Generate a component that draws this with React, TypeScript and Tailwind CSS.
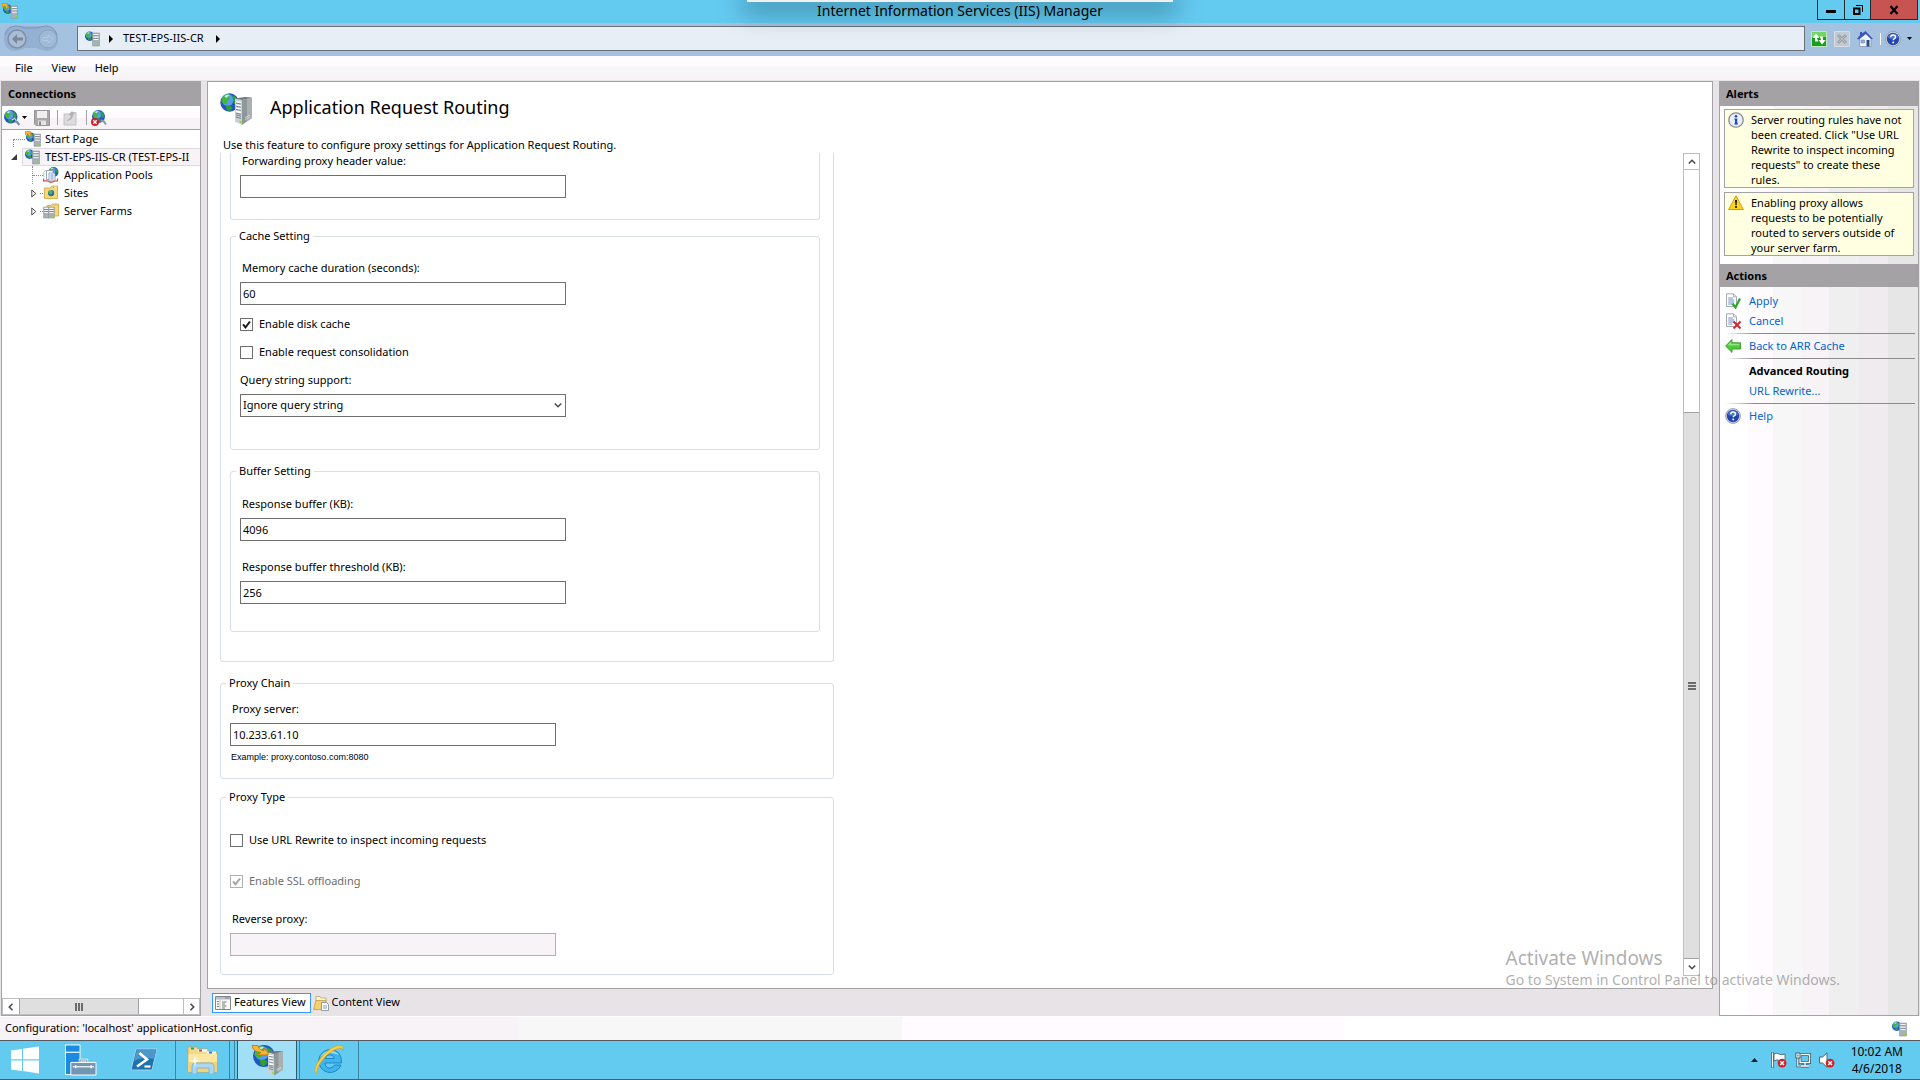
import React, { useState } from "react"

type IconProps = { className?: string }

/* ---------- ICONS ---------- */

function Globe({ x, y, s }: { x: number; y: number; s: number }) {
  return (
    <g transform={`translate(${x} ${y}) scale(${s})`}>
      <circle cx="5" cy="5" r="5" fill="#1f56c4" />
      <circle cx="4" cy="3.6" r="3.2" fill="#6db4f4" opacity="0.75" />
      <path d="M1.2 2.2C2.4.8 3.8.3 5 .6L4.3 2l.9.9-1.6 1.4.4 1.3-1.6.3L.6 4.6z" fill="#3fb83a" />
      <path d="M6.4 1l2 1 1 2-.5 2.3-1.4-.6-.5-2zM3 6.6l2.6.2 1 1.2-1.6 1.8-1.6-.9z" fill="#2f9e36" />
      <path d="M2.2 1.6q1.6-1.1 2.8-.6L3.2 2.6z" fill="#e9f8ff" opacity="0.8" />
    </g>
  )
}

function Server({ x, y, s }: { x: number; y: number; s: number }) {
  return (
    <g transform={`translate(${x} ${y}) scale(${s})`}>
      <path d="M0 0h7v13H0z" fill="#a9b1b8" />
      <path d="M0 0h7v13H0z" fill="none" stroke="#8d969d" strokeWidth="0.6" />
      <path d="M1 1h5v1.4H1zM1 3.4h5v1.4H1zM1 5.8h5v1.2H1z" fill="#f3f6f8" />
      <path d="M1 2.5h5v.6H1zM1 5h5v.6H1z" fill="#59636c" />
      <path d="M4.4 10.4h1.7v1.6H4.4z" fill="#7fe01c" />
    </g>
  )
}

function IisIcon({ className = "w-4 h-4" }: IconProps) {
  return (
    <svg viewBox="0 0 16 16" className={className} aria-hidden="true">
      <Globe x={0} y={0.5} s={0.95} />
      <Server x={7.5} y={2} s={1} />
    </svg>
  )
}

function IisHomeIcon({ className = "w-4 h-4" }: IconProps) {
  return (
    <svg viewBox="0 0 16 16" className={className} aria-hidden="true">
      <Globe x={1} y={1.5} s={0.95} />
      <Server x={9} y={3} s={0.95} />
      <path d="M0 .5h5.5v3L7 3.2 4.6 6 2.8 2.6 0 4z" fill="#f7b52a" stroke="#c27a08" strokeWidth="0.5" />
    </svg>
  )
}

function Tower({ x, y, s }: { x: number; y: number; s: number }) {
  return (
    <g transform={`translate(${x} ${y}) scale(${s})`}>
      <path d="M0 1.4L7 3v25L0 24.6z" fill="#c9d1d7" />
      <path d="M7 3l10-2.6V21L7 28z" fill="#8f9898" />
      <path d="M12 1.8L17 .4V21l-5 3.5z" fill="#b4bbbb" opacity="0.7" />
      <path d="M0 1.4L10 0l7 .4L7 3z" fill="#6e7880" />
      <path d="M1 4l5 1v1.6L1 5.6zM1 7.2l5 1v1.6l-5-1zM1 10.4l5 1V13l-5-1zM1 13.6l5 1v1.6l-5-1z" fill="#fff" />
      <path d="M1 6l5 1M1 9.2l5 1M1 12.4l5 1M1 16.2l5 1M1 18l5 1.2M1 20l5 1.4" stroke="#56616b" strokeWidth="0.7" />
      <path d="M4.6 23.5l2 .8v2l-2-.9z" fill="#84e01e" />
      <path d="M10 20.5l5-3v1l-5 3zM10 22.4l5-3v.8l-5 3z" fill="#d8dddd" />
    </g>
  )
}

function IisLargeIcon({ className = "w-8 h-8" }: IconProps) {
  return (
    <svg viewBox="0 0 32 32" className={className} aria-hidden="true">
      <Globe x={0.3} y={0.3} s={1.85} />
      <Tower x={15} y={4} s={1} />
    </svg>
  )
}

function IisTaskIcon({ className = "w-8 h-8" }: IconProps) {
  return (
    <svg viewBox="0 0 32 32" className={className} aria-hidden="true">
      <Globe x={2} y={1} s={2.2} />
      <Tower x={17} y={7} s={0.88} />
      <path d="M1 1.5h6q1 5 6 5V4l4 4.500v2.500H7l3-2.500Q2 8 1 1.500z" fill="#f8b62e" stroke="#b87409" strokeWidth="0.8" />
    </svg>
  )
}

function ConnectIcon({ className = "w-4 h-4" }: IconProps) {
  return (
    <svg viewBox="0 0 16 16" className={className} aria-hidden="true">
      <Globe x={0} y={0} s={1.35} />
      <path d="M7.500 10l3-2 2 2.500M11 11.500l2 .5 2.500 3" fill="none" stroke="#6f8fa5" strokeWidth="2" />
      <path d="M8 10l2.600-1.500L12 10.500" fill="none" stroke="#dbe9f1" strokeWidth="0.9" />
    </svg>
  )
}

function RedCross({ x, y }: { x: number; y: number }) {
  return (
    <g transform={`translate(${x} ${y})`}>
      <circle cx="4" cy="4" r="4" fill="#d61f26" />
      <path d="M2.300 2.300l3.400 3.400M5.700 2.300L2.300 5.700" stroke="#fff" strokeWidth="1.300" />
    </g>
  )
}

function DisconnectIcon({ className = "w-4 h-4" }: IconProps) {
  return (
    <svg viewBox="0 0 16 16" className={className} aria-hidden="true">
      <Globe x={1} y={0} s={1.3} />
      <path d="M9.500 10.500l3 .5 2.500 3.500" fill="none" stroke="#7f9bad" strokeWidth="2" />
      <RedCross x={0} y={8} />
    </svg>
  )
}

function SaveIcon({ className = "w-4 h-4" }: IconProps) {
  return (
    <svg viewBox="0 0 16 16" className={className} aria-hidden="true">
      <path d="M.5.5h15v15H2L.5 14z" fill="#a9a9a9" stroke="#979797" />
      <path d="M3 1h10v7H3z" fill="#f0f0f0" />
      <path d="M4 10.500h8V15H4z" fill="#e3e3e3" />
      <path d="M5 11.500h2V15H5z" fill="#8b8b8b" />
    </svg>
  )
}

function UpFolderIcon({ className = "w-4 h-4" }: IconProps) {
  return (
    <svg viewBox="0 0 16 16" className={className} aria-hidden="true">
      <path d="M2 4h6l1-1.500h5V15H2z" fill="#dcdcdc" stroke="#c2c2c2" />
      <path d="M5 10q4-1 3.500-5H6.500L10 1l3 3.500h-2Q11 10 5 11z" fill="#b1b1b1" />
    </svg>
  )
}

function AppPoolsIcon({ className = "w-4 h-4" }: IconProps) {
  return (
    <svg viewBox="0 0 16 16" className={className} aria-hidden="true">
      <Globe x={5.500} y={0} s={1} />
      <path d="M3.500 3.500h6.500v9H3.500z" fill="#fff" stroke="#8294a8" strokeWidth="0.8" />
      <path d="M6 6h6v8H6z" fill="#f5f9fd" stroke="#8294a8" strokeWidth="0.8" />
      <path d="M7.500 8h3M7.500 10h3M7.500 12h3" stroke="#4e8bd0" strokeWidth="0.9" />
      <path d="M.5 11.500v2.300h3.500L8 15.500l4-1.500h2.500v-2.500" fill="none" stroke="#d0483d" strokeWidth="1.200" />
      <path d="M.8 10V5.500L3 3" fill="none" stroke="#9fb0c0" strokeWidth="0.800" />
    </svg>
  )
}

function SitesIcon({ className = "w-4 h-4" }: IconProps) {
  return (
    <svg viewBox="0 0 16 16" className={className} aria-hidden="true">
      <path d="M1.500 3h6l1-2h6v12.500h-13z" fill="#f7d877" stroke="#d0a23c" strokeWidth="0.8" />
      <path d="M9.500 1.800h4v1.400h-4z" fill="#fff" />
      <path d="M9.800 2h1.500v1H9.800z" fill="#4ba3e3" />
      <Globe x={5} y={5} s={0.62} />
    </svg>
  )
}

function FarmsIcon({ className = "w-4 h-4" }: IconProps) {
  return (
    <svg viewBox="0 0 16 16" className={className} aria-hidden="true">
      <path d="M4 2.500h4l1-1.500h6.500v12H4z" fill="#f7d877" stroke="#d0a23c" strokeWidth="0.8" />
      <path d="M11 1.600h3.500V3H11z" fill="#a8cdea" />
      <Server x={0.400} y={4} s={0.85} />
      <Server x={5.500} y={4} s={0.85} />
    </svg>
  )
}

function RefreshIcon({ className = "w-4 h-4" }: IconProps) {
  return (
    <svg viewBox="0 0 16 16" className={className} aria-hidden="true">
      <path d="M.5.5h15v15H.5z" fill="#6fd862" stroke="#c3e6c0" />
      <path d="M1 6h14v9H1z" fill="#15a01b" />
      <path d="M5 2.500L1.200 7H4v3.500h3V8.500H6V7h2.500zM11 13.500l3.800-4.500H12V5.500H9v2h1V9H7.500z" fill="#fff" />
    </svg>
  )
}

function StopIcon({ className = "w-4 h-4" }: IconProps) {
  return (
    <svg viewBox="0 0 16 16" className={className} aria-hidden="true">
      <path d="M.5.5h15v15H.5z" fill="#c3cad4" stroke="#d8dde4" />
      <path d="M4 4l8 8M12 4l-8 8" stroke="#98a2ad" strokeWidth="3" />
      <path d="M4.500 4.500l7 7M11.500 4.500l-7 7" stroke="#b9c0ca" strokeWidth="1" />
    </svg>
  )
}

function HouseIcon({ className = "w-4 h-4" }: IconProps) {
  return (
    <svg viewBox="0 0 16 16" className={className} aria-hidden="true">
      <path d="M2.500 7L9 2l5 5.500v8h-11.500z" fill="#f1f5fa" stroke="#8797ab" strokeWidth="0.8" />
      <path d="M0 8L3 4V1h2v1.500L8.500 0 16 8h-2L8.800 3 2 8.500z" fill="#3b55c0" />
      <path d="M9.500 9h3v6.500h-3z" fill="#274e86" />
      <path d="M4 9h3.500v3H4z" fill="#8db2dd" stroke="#6d87a6" strokeWidth="0.6" />
    </svg>
  )
}

function HelpIcon({ className = "w-4 h-4" }: IconProps) {
  return (
    <svg viewBox="0 0 16 16" className={className} aria-hidden="true">
      <circle cx="8" cy="8" r="7.500" fill="#d4d8e2" stroke="#8e97a8" strokeWidth="0.8" />
      <circle cx="8" cy="8" r="6.200" fill="#2047b0" />
      <path d="M2.500 6.500a5.800 5.800 0 0 1 11 0q-5.500 3-11 0z" fill="#5a82da" opacity="0.7" />
      <path d="M5.800 6.200q0-2.200 2.300-2.200t2.300 1.900q0 1.300-1.300 1.900-.9.500-.9 1.500" fill="none" stroke="#fff" strokeWidth="1.500" />
      <circle cx="8.200" cy="11.600" r="1" fill="#fff" />
    </svg>
  )
}

function InfoIcon({ className = "w-4 h-4" }: IconProps) {
  return (
    <svg viewBox="0 0 16 16" className={className} aria-hidden="true">
      <circle cx="8" cy="8" r="7.200" fill="#eceef5" stroke="#848a96" strokeWidth="1.300" />
      <circle cx="8" cy="4.200" r="1.300" fill="#1d49c0" />
      <path d="M6.300 6.500h2.900v5h.8v1H6.300v-1H7v-4h-.7z" fill="#1d49c0" />
    </svg>
  )
}

function WarningIcon({ className = "w-4 h-4" }: IconProps) {
  return (
    <svg viewBox="0 0 16 16" className={className} aria-hidden="true">
      <path d="M8 .8l7.400 13.700H.6z" fill="#fcd51c" stroke="#cf9d12" strokeLinejoin="round" />
      <path d="M7 5h2l-.4 5.200H7.400z" fill="#141414" />
      <circle cx="8" cy="12" r="1.100" fill="#141414" />
    </svg>
  )
}

function PageLines() {
  return (
    <>
      <path d="M1.500.8h7l3 3v9.700h-10z" fill="#fdfdfe" stroke="#98a0a8" strokeWidth="0.9" />
      <path d="M8.500.8v3h3" fill="none" stroke="#98a0a8" strokeWidth="0.8" />
      <path d="M3.300 5h4.500M3.300 7h6M3.300 9h6M3.300 11h4" stroke="#5e83b9" strokeWidth="0.9" />
    </>
  )
}

function ApplyIcon({ className = "w-4 h-4" }: IconProps) {
  return (
    <svg viewBox="0 0 16 16" className={className} aria-hidden="true">
      <PageLines />
      <path d="M7.500 10.500l3 4 4.500-9" fill="none" stroke="#2fa82a" strokeWidth="2.200" />
    </svg>
  )
}

function CancelIcon({ className = "w-4 h-4" }: IconProps) {
  return (
    <svg viewBox="0 0 16 16" className={className} aria-hidden="true">
      <PageLines />
      <path d="M8.500 8.500l7 7M15.500 8.500l-7 7" stroke="#d8262c" strokeWidth="2" />
    </svg>
  )
}

function BackIcon({ className = "w-4 h-4" }: IconProps) {
  return (
    <svg viewBox="0 0 16 16" className={className} aria-hidden="true">
      <path d="M.6 8L7 1.500v3.300h8.500v6.200H7v3.400z" fill="#4fc83b" stroke="#319a28" strokeWidth="0.9" strokeLinejoin="round" />
      <path d="M2.500 7.500L6.200 3.700v2h8.300v1.500z" fill="#a6ec93" opacity="0.8" />
    </svg>
  )
}

function FeaturesIcon({ className = "w-4 h-4" }: IconProps) {
  return (
    <svg viewBox="0 0 16 16" className={className} aria-hidden="true">
      <path d="M.5 1.500h15v13H.5z" fill="#fbfbf8" stroke="#82878f" />
      <path d="M1 2h14v2.500H1z" fill="#b6bfca" />
      <path d="M10.500 2.500h1v1h-1zM12.500 2.500h1v1h-1z" fill="#4b5c79" />
      <path d="M5 4.500v10" stroke="#a9aeb5" strokeWidth="0.7" />
      <path d="M2 6.500h2M2 9h2M2 11.500h2M7 7h4.500M7 9h3M7 11h4.500M7 13h3" stroke="#6b7a70" />
    </svg>
  )
}

function ContentIcon({ className = "w-4 h-4" }: IconProps) {
  return (
    <svg viewBox="0 0 16 16" className={className} aria-hidden="true">
      <path d="M3 1.500h4l1 1.500h5v7H3z" fill="#fdf6dc" stroke="#b9a468" strokeWidth="0.8" />
      <path d="M.5 14.500L3 5.500h10l-2 9z" fill="#f3cf70" stroke="#c79c40" strokeWidth="0.8" />
      <path d="M8.500 7.500h5l2 2v6h-7z" fill="#fff" stroke="#7d8894" strokeWidth="0.8" />
      <path d="M10 11h4M10 13h4" stroke="#5c83b5" strokeWidth="0.8" />
    </svg>
  )
}

function WindowsLogo() {
  return (
    <svg viewBox="0 0 28 27" className="w-7 h-7" aria-hidden="true">
      <path d="M0 4l11-1.600v10.400H0zM12 2.200L28 0v12.800H12zM0 13.900h11v10.500L0 22.900zM12 13.900h16V27l-16-2.400z" fill="#fff" />
    </svg>
  )
}

function ServerManagerIcon() {
  return (
    <svg viewBox="0 0 33 32" className="w-8 h-8" aria-hidden="true">
      <path d="M.5.500h15V31H.5z" fill="#1b8be0" stroke="#fff" />
      <path d="M1 8h14" stroke="#fff" strokeWidth="1.200" />
      <path d="M15.500 19v-3h7v3" fill="none" stroke="#fff" strokeWidth="2.600" />
      <path d="M15.500 19v-3h7v3" fill="none" stroke="#6f92b0" strokeWidth="1.200" />
      <path d="M6 18.500h26V31.500H6z" fill="#7296b2" stroke="#fff" />
      <path d="M8 23h22" stroke="#fff" strokeWidth="1.200" />
      <path d="M11 21.500v3M27 21.500v3" stroke="#fff" strokeWidth="1.500" />
    </svg>
  )
}

function PowerShellIcon() {
  return (
    <svg viewBox="0 0 28 24" className="w-7 h-6" aria-hidden="true">
      <path d="M6 1h21l-5 21H1z" fill="#1f72ae" stroke="#9fd1ee" strokeLinejoin="round" />
      <path d="M6.600 2H26l-2.500 9Q12 8 4 13z" fill="#5fa7d6" opacity="0.7" />
      <path d="M9.500 5l7.500 6.500L7 18.500" fill="none" stroke="#fff" strokeWidth="2.500" />
      <path d="M14.500 18.500h6" stroke="#fff" strokeWidth="2.200" />
    </svg>
  )
}

function ExplorerIcon() {
  return (
    <svg viewBox="0 0 32 28" className="w-8 h-7" aria-hidden="true">
      <path d="M1 1h9l1 2h10v3h9v20H1z" fill="#f3d98c" stroke="#caa24a" strokeWidth="0.8" />
      <path d="M4 1.500h3v2H4z" fill="#28a745" />
      <path d="M11 3.500h9v2h-9z" fill="#fff" />
      <path d="M12 3.500h3v2h-3z" fill="#d8413a" />
      <path d="M20 5.500h9v2h-9z" fill="#fff" />
      <path d="M22 5.500h3v2h-3z" fill="#2f7fd8" />
      <path d="M1.500 8h28.500v18H1.500z" fill="#fbe7a4" />
      <path d="M1.500 16h28.500v10H1.500z" fill="#f3d27a" />
      <path d="M5 28v-8q0-3 4-3h14q4 0 4 3v8h-5v-6H10v6z" fill="#a9d8f2" stroke="#6fb0d8" strokeWidth="0.8" />
      <path d="M8 9l1 5 5 1-5 1-1 5-1-5-5-1 5-1z" fill="#fff" opacity="0.9" />
    </svg>
  )
}

function IeIcon() {
  return (
    <svg viewBox="0 0 32 32" className="w-8 h-8" aria-hidden="true">
      <path d="M17 5.500A11.500 11.500 0 1 0 28 21h-6.500q-1.500 3-4.800 3-4.400 0-4.700-5H28.500Q29 6 17 5.500zM12.200 14.500q.8-3.700 4.600-3.700 3.900 0 4.600 3.700z" fill="#3fb4ee" stroke="#1579bd" strokeWidth="0.8" />
      <path d="M7 14q3-7 10-7 6 0 9 4-4-2-9-2-6 0-10 5z" fill="#bfe9fc" opacity="0.8" />
      <path d="M4.500 30.500Q-1 28 5 18 12 7 22 2.500 31-1 30.500 7 30 3 25 4.500 15 8 8 18 2 27 4.500 30.500z" fill="#fbd23c" stroke="#d79e13" strokeWidth="0.6" />
    </svg>
  )
}

function FlagIcon() {
  return (
    <svg viewBox="0 0 16 16" className="w-4 h-4" aria-hidden="true">
      <path d="M1.500 0v16" stroke="#3f5560" strokeWidth="2.600" />
      <path d="M1.500.500v15" stroke="#fff" strokeWidth="1.200" />
      <path d="M3 2q3-1.500 5 0t6 0v7q-3 1-5.500-.5T3 9z" fill="#fff" stroke="#3f5560" strokeWidth="0.8" />
      <g transform="translate(-1 -1) scale(1.1)"><RedCross x={7} y={7} /></g>
    </svg>
  )
}

function NetworkIcon() {
  return (
    <svg viewBox="0 0 16 16" className="w-4 h-4" aria-hidden="true">
      <path d="M5 2.500h9.500v8H5zM10 10.500V14M6 14h8" fill="none" stroke="#2f5060" strokeWidth="2.800" />
      <path d="M5 2.500h9.500v8H5zM10 10.500V14M6 14h8" fill="none" stroke="#fff" strokeWidth="1.300" />
      <path d="M2.800 5.500V14h3" fill="none" stroke="#2f5060" strokeWidth="2.600" />
      <path d="M2.800 5.500V14h3" fill="none" stroke="#fff" strokeWidth="1.200" />
      <path d="M.8 1h4.200v5H.8z" fill="#fff" stroke="#2f5060" strokeWidth="0.9" />
      <path d="M2.400 2.500h1v2h-1z" fill="#2f5060" />
    </svg>
  )
}

function SpeakerIcon() {
  return (
    <svg viewBox="0 0 16 16" className="w-4 h-4" aria-hidden="true">
      <path d="M.6 5h3L8 .8v14.500L3.600 11h-3z" fill="#fff" stroke="#3f5560" strokeWidth="0.900" />
      <g transform="translate(-1 -1) scale(1.1)"><RedCross x={7} y={7} /></g>
    </svg>
  )
}

function Arrow({ className }: IconProps) {
  return (
    <svg viewBox="0 0 4 8" className={className} aria-hidden="true">
      <path d="M0 0l4 4-4 4z" fill="#000" />
    </svg>
  )
}

function Chevron({ className }: IconProps) {
  return (
    <svg viewBox="0 0 8 8" className={className} aria-hidden="true">
      <path d="M.8 5.500L4 2.300l3.200 3.200" fill="none" stroke="#4d4d4d" strokeWidth="1.600" />
    </svg>
  )
}

/* ---------- FORM PARTS ---------- */

function Group({ title, className = "", children }: { title: string; className?: string; children: React.ReactNode }) {
  return (
    <fieldset className={`border border-[#d6dfea] rounded-[3px] pl-[9px] min-w-0 ${className}`}>
      <legend className="-ml-1 px-[3px] leading-4">{title}</legend>
      {children}
    </fieldset>
  )
}

function TextField({ id, label, value = "", disabled = false, className = "" }: {
  id: string
  label: string
  value?: string
  disabled?: boolean
  className?: string
}) {

  const [text, setText] = useState(value)

  return (
    <div className={className}>
      <label htmlFor={id} className="block pl-0.5 mb-1.5 leading-4">{label}</label>
      <input
        id={id}
        type="text"
        value={text}
        disabled={disabled}
        onChange={(e) => setText(e.target.value)}
        className="block w-[326px] h-[23px] px-0.5 border border-[#6f6f6f] bg-white outline-none disabled:bg-[#f7f3f7] disabled:border-[#adb2b5]"
      />
    </div>
  )
}

function CheckField({ label, checked = false, disabled = false, className = "" }: {
  label: string
  checked?: boolean
  disabled?: boolean
  className?: string
}) {

  const [on, setOn] = useState(checked)

  return (
    <label className={`flex items-center gap-[6px] h-4 w-fit ${disabled ? "text-[#6d6d6d]" : ""} ${className}`}>
      <span className="relative w-[13px] h-[13px]">
        <input
          type="checkbox"
          checked={on}
          disabled={disabled}
          onChange={(e) => setOn(e.target.checked)}
          className="block appearance-none w-full h-full border border-[#6f6f6f] bg-white disabled:border-[#adb2b5]"
        />
        {on && (
          <svg viewBox="0 0 13 13" className="absolute inset-0 pointer-events-none" aria-hidden="true">
            <path d="M3 6.300l2.500 3L10 3.500" fill="none" stroke={disabled ? "#a5a5a5" : "#1c1c1c"} strokeWidth="2" />
          </svg>
        )}
      </span>
      {label}
    </label>
  )
}

/* ---------- TITLE, ADDRESS AND MENU BARS ---------- */

function TitleBar() {
  return (
    <header className="relative h-[23px] shrink-0 bg-[#64cbf0] flex justify-between">
      <div className="flex-1 pl-0.5 pt-[3px]"><IisHomeIcon /></div>

      {/* SESSION BAR */}
      <div className="absolute left-1/2 -translate-x-1/2 top-0 w-[426px] h-0.5 bg-[#f0f0f0] shadow-[0_4px_24px_5px_rgba(0,40,60,0.55)]"></div>

      <h1 className="relative text-[14px] leading-[22px]">Internet Information Services (IIS) Manager</h1>

      <div className="flex-1 flex justify-end pr-0.5">
        <div className="flex h-5 border border-t-0 border-[#26292b] divide-x divide-[#26292b]">
          <button aria-label="Minimize" className="w-[27px] flex justify-center pt-2.5">
            <span className="block w-2.5 h-[3px] bg-black"></span>
          </button>
          <button aria-label="Restore" className="w-[26px] flex items-center justify-center">
            <svg viewBox="0 0 10 10" className="w-2.5 h-2.5" aria-hidden="true">
              <path d="M1 3.500h5.500V9H1z" fill="none" stroke="#000" strokeWidth="2" />
              <path d="M3 .5h6.500V7" fill="none" stroke="#000" />
            </svg>
          </button>
          <button aria-label="Close" className="w-[46px] bg-[#c75450] flex items-center justify-center">
            <svg viewBox="0 0 10 10" className="w-2.5 h-2.5" aria-hidden="true">
              <path d="M1.500 1l7 8M8.500 1l-7 8" stroke="#000" strokeWidth="2.200" />
            </svg>
          </button>
        </div>
      </div>
    </header>
  )
}

function AddressBar() {
  return (
    <div className="h-[33px] shrink-0 bg-[#a4c1df] flex items-center pl-1 pr-2 pb-0.5">
      <svg viewBox="0 0 55 27" className="w-[55px] h-[27px]" aria-hidden="true">
        <path d="M12 1h30q12 1 12 13T42 26q-5 0-9-3H21q-4 3-9 3Q0 26 0 13T12 1z" fill="#94b1d3" />
        <path d="M1 10Q4 1 12 1q4 0 8 2h14q4-2 8-2 8 0 11 9" fill="none" stroke="#7796bb" />
        <circle cx="13" cy="14" r="9" fill="#a7bdd8" stroke="#7f8fa5" strokeWidth="1.500" />
        <path d="M8 14l5-5v3.500h6v3h-6V19z" fill="#7b8798" />
        <circle cx="44" cy="14" r="9" fill="#9fb9d9" stroke="#8ba1bd" />
        <path d="M49 14l-5-4v2.500h-5v3h5V18z" fill="none" stroke="#b5c9e1" />
      </svg>

      <nav className="ml-[18px] flex-1 h-[25px] border border-[#6b7076] bg-[#e7eef6] flex items-center pl-[7px]">
        <IisIcon />
        <Arrow className="ml-2 w-1 h-2" />
        <a href="#server" className="ml-2.5">TEST-EPS-IIS-CR</a>
        <Arrow className="ml-3 w-1 h-2" />
      </nav>

      <div className="ml-1.5 flex items-center gap-[7px]">
        <button aria-label="Refresh"><RefreshIcon /></button>
        <button aria-label="Stop"><StopIcon /></button>
        <button aria-label="Home"><HouseIcon /></button>
        <span className="w-px h-3 bg-white"></span>
      </div>
      <button aria-label="Help" className="ml-1 flex items-center gap-1.5">
        <HelpIcon />
        <svg viewBox="0 0 5 3" className="w-[5px] h-[3px]" aria-hidden="true"><path d="M0 0h5L2.500 3z" /></svg>
      </button>
    </div>
  )
}

function MenuBar() {
  return (
    <div className="h-[25px] shrink-0 flex items-center gap-[19px] pl-[15px] bg-[linear-gradient(#fffbff_0_10px,#f6f7f6_10px_18px,#f7f3f7_18px_24px,#e7e3e7_24px)]">
      <button>File</button>
      <button>View</button>
      <button>Help</button>
    </div>
  )
}

/* ---------- CONNECTIONS ---------- */

function Connections() {
  return (
    <aside className="w-[200px] ml-px shrink-0 border border-[#a5a2a5] bg-white flex flex-col min-h-0">

      <h2 className="h-6 shrink-0 bg-[#a5a2a5] font-bold leading-6 pl-1.5">Connections</h2>

      <div className="h-6 shrink-0 border-b border-[#a5a2a5] flex items-center pl-0.5 bg-[linear-gradient(#ffffff_0_6px,#fffbff_6px_12px,#f7f3f7_12px)]">
        <button aria-label="Connect" className="flex items-center gap-0.5">
          <ConnectIcon />
          <svg viewBox="0 0 5 3" className="w-[5px] h-[3px]" aria-hidden="true"><path d="M0 0h5L2.500 3z" /></svg>
        </button>
        <button aria-label="Save" disabled className="ml-[7px]"><SaveIcon /></button>
        <span className="ml-[7px] w-px h-[15px] bg-[#a5a2a5]"></span>
        <button aria-label="Up" disabled className="ml-1"><UpFolderIcon /></button>
        <span className="ml-2 w-px h-[15px] bg-[#a5a2a5]"></span>
        <button aria-label="Delete connection" className="ml-1"><DisconnectIcon /></button>
      </div>

      {/* TREE */}
      <ul className="flex-1 min-h-0 overflow-hidden whitespace-nowrap">
        <li className="h-[18px] flex items-center">
          <span className="ml-[11px] w-3 h-2 mt-2 border-l border-t border-dotted border-[#8c8c8c]"></span>
          <IisHomeIcon className="w-4 h-4 shrink-0" />
          <span className="ml-1">Start Page</span>
        </li>
        <li className="h-[18px] flex items-center">
          <svg viewBox="0 0 6 6" className="ml-[9px] w-1.5 h-1.5 shrink-0" aria-hidden="true"><path d="M6 0v6H0z" fill="#3c3c3c" /></svg>
          <span className="ml-[5px] h-[18px] flex-1 min-w-0 flex items-center pl-0.5 bg-[#f7f3f7] border-y border-l border-[#dedbde]">
            <IisIcon className="w-4 h-4 shrink-0" />
            <span className="ml-1">TEST-EPS-IIS-CR (TEST-EPS-II</span>
          </span>
        </li>
        <li className="h-[18px] flex items-center">
          <span className="ml-[30px] w-[11px] h-[18px] border-l border-dotted border-[#8c8c8c] flex items-center">
            <span className="w-full border-t border-dotted border-[#8c8c8c]"></span>
          </span>
          <AppPoolsIcon className="w-4 h-4 shrink-0" />
          <span className="ml-[5px]">Application Pools</span>
        </li>
        <li className="h-[18px] flex items-center">
          <svg viewBox="0 0 6 9" className="ml-[29px] w-1.5 h-[9px] shrink-0" aria-hidden="true"><path d="M.8 1v7l4-3.500z" fill="#fff" stroke="#4c4c4c" /></svg>
          <span className="ml-[3px] w-[3px] border-t border-dotted border-[#8c8c8c]"></span>
          <SitesIcon className="w-4 h-4 shrink-0" />
          <span className="ml-[5px]">Sites</span>
        </li>
        <li className="h-[18px] flex items-center">
          <svg viewBox="0 0 6 9" className="ml-[29px] w-1.5 h-[9px] shrink-0" aria-hidden="true"><path d="M.8 1v7l4-3.500z" fill="#fff" stroke="#4c4c4c" /></svg>
          <span className="ml-[3px] w-[3px] border-t border-dotted border-[#8c8c8c]"></span>
          <FarmsIcon className="w-4 h-4 shrink-0" />
          <span className="ml-[5px]">Server Farms</span>
        </li>
      </ul>

      {/* HORIZONTAL SCROLLBAR */}
      <div className="h-[17px] shrink-0 flex border border-[#bdbebd]">
        <button aria-label="Scroll left" className="w-4 flex items-center justify-center"><Chevron className="w-2 h-2 -rotate-90" /></button>
        <div className="w-[120px] bg-[#dedfde] border-x border-[#a5a2a5] flex items-center justify-center gap-px">
          <span className="w-0.5 h-2 bg-[#6b6b6b]"></span>
          <span className="w-0.5 h-2 bg-[#6b6b6b]"></span>
          <span className="w-0.5 h-2 bg-[#6b6b6b]"></span>
        </div>
        <div className="flex-1"></div>
        <button aria-label="Scroll right" className="w-4 border-l border-[#bdbebd] flex items-center justify-center"><Chevron className="w-2 h-2 rotate-90" /></button>
      </div>

    </aside>
  )
}

/* ---------- FEATURE PAGE ---------- */

function ProxySettings() {

  const [query, setQuery] = useState("ignore")

  return (
    <form className="w-[614px]" onSubmit={(e) => e.preventDefault()}>

      {/* SERVER PROXY SETTINGS */}
      <div className="border border-t-0 border-[#d6dfea] rounded-b-[3px] pl-[9px] pr-[13px] pb-[29px]">

        <div className="border border-t-0 border-[#d6dfea] rounded-b-[3px] pl-[9px] pb-[21px]">
          <TextField id="header" label="Forwarding proxy header value:" />
        </div>

        <Group title="Cache Setting" className="mt-2 pb-8">
          <TextField id="duration" label="Memory cache duration (seconds):" value="60" className="pt-4" />
          <CheckField label="Enable disk cache" checked className="mt-[11px]" />
          <CheckField label="Enable request consolidation" className="mt-3" />
          <label htmlFor="query" className="block mt-3 mb-1.5 leading-4">Query string support:</label>
          <div className="relative w-[326px]">
            <select
              id="query"
              value={query}
              onChange={(e) => setQuery(e.target.value)}
              className="block appearance-none w-full h-[23px] px-0.5 border border-[#6f6f6f] bg-white outline-none"
            >
              <option value="ignore">Ignore query string</option>
              <option value="include">Include query string</option>
              <option value="none">Do not cache</option>
            </select>
            <Chevron className="absolute right-1 top-[7px] w-2 h-2 rotate-180 pointer-events-none" />
          </div>
        </Group>

        <Group title="Buffer Setting" className="mt-[13px] pb-[27px]">
          <TextField id="buffer" label="Response buffer (KB):" value="4096" className="pt-[17px]" />
          <TextField id="threshold" label="Response buffer threshold (KB):" value="256" className="pt-[18px]" />
        </Group>

      </div>

      {/* PROXY CHAIN */}
      <Group title="Proxy Chain" className="mt-[13px] pb-[13px]">
        <TextField id="proxy" label="Proxy server:" value="10.233.61.10" className="pt-2.5" />
        <p className="mt-[3px] pl-px font-['Liberation_Sans',sans-serif] text-[9px] leading-4">Example: proxy.contoso.com:8080</p>
      </Group>

      {/* PROXY TYPE */}
      <Group title="Proxy Type" className="mt-2.5 pb-[18px]">
        <CheckField label="Use URL Rewrite to inspect incoming requests" className="mt-[27px]" />
        <CheckField label="Enable SSL offloading" checked disabled className="mt-[25px]" />
        <TextField id="reverse" label="Reverse proxy:" disabled className="pt-[22px]" />
      </Group>

    </form>
  )
}

function FeaturePage() {
  return (
    <main className="flex-1 min-w-0 mx-1.5 flex flex-col">

      <div className="flex-1 min-h-0 border border-[#a5a2a5] bg-white px-3 pb-3 flex flex-col">

        <div className="flex items-center pt-2.5 h-10 shrink-0">
          <IisLargeIcon className="w-8 h-8 mt-1" />
          <h2 className="ml-[18px] text-[18px] leading-6">Application Request Routing</h2>
        </div>

        <p className="pl-[3px] pt-[15px] h-[31px] leading-4 shrink-0">Use this feature to configure proxy settings for Application Request Routing.</p>

        <div className="flex-1 min-h-0 flex justify-between">

          <div className="overflow-hidden"><ProxySettings /></div>

          {/* VERTICAL SCROLLBAR */}
          <div className="w-[17px] border border-[#bdbebd] flex flex-col">
            <button aria-label="Scroll up" className="h-4 border-b border-[#bdbebd] flex items-center justify-center"><Chevron className="w-2 h-2" /></button>
            <div className="flex-[243]"></div>
            <div className="flex-[546] bg-[#dedfde] border-y border-[#a5a2a5] flex flex-col items-center justify-center gap-px">
              <span className="w-2 h-0.5 bg-[#6b6b6b]"></span>
              <span className="w-2 h-0.5 bg-[#6b6b6b]"></span>
              <span className="w-2 h-0.5 bg-[#6b6b6b]"></span>
            </div>
            <button aria-label="Scroll down" className="h-4 flex items-center justify-center"><Chevron className="w-2 h-2 rotate-180" /></button>
          </div>

        </div>

      </div>

      {/* VIEW TABS */}
      <div className="h-[27px] shrink-0 pl-[5px] flex items-center">
        <button className="h-5 pl-0.5 pr-1 flex items-center gap-[3px] border border-[#3399ff] bg-white"><FeaturesIcon />Features View</button>
        <button className="h-5 px-0.5 flex items-center gap-[3px]"><ContentIcon />Content View</button>
      </div>

    </main>
  )
}

/* ---------- ALERTS AND ACTIONS ---------- */

function PanelAction({ icon, label }: { icon?: React.ReactNode; label: string }) {
  return (
    <a href="#action" className="h-5 flex items-center gap-2 text-[#0066cc]">
      <span className="w-4 h-4">{icon}</span>
      {label}
    </a>
  )
}

function Divider() {
  return <div className="h-px my-0.5 bg-[linear-gradient(90deg,transparent,#8c8a8c_16%)]"></div>
}

function ActionsPane() {
  return (
    <aside className="w-[200px] shrink-0 border border-[#a5a2a5] bg-[linear-gradient(90deg,#fff_0_14%,#fffbff_14%_27%,#f6f7f6_27%_42%,#f7f3f7_42%_55%,#efefef_55%_70%,#efebef_70%_85%,#e6e6e6_85%)]">

      <h2 className="h-6 bg-[#a5a2a5] font-bold leading-6 pl-1.5">Alerts</h2>

      <div className="px-1 pt-[3px] pb-1 flex flex-col gap-1 leading-[15px]">
        <div className="h-[79px] border border-[#a5a2a5] bg-[#ffffe1] flex gap-[7px] pl-[3px] pt-0.5">
          <InfoIcon className="w-4 h-4 shrink-0" />
          <p className="whitespace-nowrap">
            Server routing rules have not<br />
            been created. Click "Use URL<br />
            Rewrite to inspect incoming<br />
            requests" to create these<br />
            rules.
          </p>
        </div>
        <div className="h-16 border border-[#a5a2a5] bg-[#ffffe1] flex gap-[7px] pl-[3px] pt-0.5">
          <WarningIcon className="w-4 h-4 shrink-0" />
          <p className="whitespace-nowrap">
            Enabling proxy allows<br />
            requests to be potentially<br />
            routed to servers outside of<br />
            your server farm.
          </p>
        </div>
      </div>

      <h2 className="mt-1 h-[23px] bg-[#a5a2a5] font-bold leading-[23px] pl-1.5">Actions</h2>

      <div className="pl-[5px] pr-[3px] pt-1">
        <PanelAction icon={<ApplyIcon />} label="Apply" />
        <PanelAction icon={<CancelIcon />} label="Cancel" />
        <Divider />
        <PanelAction icon={<BackIcon />} label="Back to ARR Cache" />
        <Divider />
        <h3 className="h-5 pl-6 leading-5 font-bold">Advanced Routing</h3>
        <PanelAction label="URL Rewrite..." />
        <Divider />
        <PanelAction icon={<HelpIcon />} label="Help" />
      </div>

    </aside>
  )
}

/* ---------- TASKBAR ---------- */

function Taskbar() {
  return (
    <footer className="h-10 shrink-0 bg-[#64cbf0] border-y border-[#555a5e] flex items-stretch">
      <button aria-label="Start" className="w-[50px] flex items-center justify-center"><WindowsLogo /></button>
      <button aria-label="Server Manager" className="w-[62px] flex items-center justify-center"><ServerManagerIcon /></button>
      <button aria-label="PowerShell" className="w-[63px] flex items-center justify-center"><PowerShellIcon /></button>
      <button aria-label="File Explorer" className="w-[55px] border-x border-[#3d87a3] flex items-center justify-center"><ExplorerIcon /></button>
      <span className="w-[5px] border-r border-[#3d87a3]"></span>
      <button aria-label="IIS Manager" className="ml-0.5 w-[60px] border-x border-[#2d5a6d] bg-[#a1dff7] flex items-center justify-center"><IisTaskIcon /></button>
      <button aria-label="Internet Explorer" className="ml-0.5 w-[60px] border-x border-[#3d87a3] flex items-center justify-center"><IeIcon /></button>

      <div className="ml-auto pr-[17px] flex items-center">
        <svg viewBox="0 0 7 4" className="w-[7px] h-1" aria-hidden="true"><path d="M0 4l3.500-4L7 4z" fill="#10222b" /></svg>
        <div className="ml-[13px] flex gap-2">
          <FlagIcon />
          <NetworkIcon />
          <SpeakerIcon />
        </div>
        <div className="ml-4 text-center text-[12px] leading-[17px]">
          10:02 AM<br />4/6/2018
        </div>
      </div>
    </footer>
  )
}

export default function App() {
  return (
    <div className="relative h-screen flex flex-col overflow-hidden bg-[#e7e3e7] text-black text-[11px] font-['Noto_Sans',sans-serif]">

      <TitleBar />
      <AddressBar />
      <MenuBar />

      <div className="flex-1 min-h-0 flex pr-px">
        <Connections />
        <FeaturePage />
        <ActionsPane />
      </div>

      {/* STATUS BAR */}
      <div className="h-6 shrink-0 border-t border-white flex items-center justify-between pl-[5px] pr-3 bg-[linear-gradient(90deg,#f7f3f7_0_27%,#f6f7f6_27%_47%,#fffbff_47%_70%,#fff_70%)]">
        <span>Configuration: 'localhost' applicationHost.config</span>
        <IisIcon />
      </div>

      <Taskbar />

      {/* ACTIVATION NOTICE */}
      <div className="absolute right-[80px] bottom-[90px] text-[#8c8c8c]/70 pointer-events-none">
        <p className="text-[19px] leading-6">Activate Windows</p>
        <p className="text-[14px] leading-5">Go to System in Control Panel to activate Windows.</p>
      </div>

    </div>
  )
}
